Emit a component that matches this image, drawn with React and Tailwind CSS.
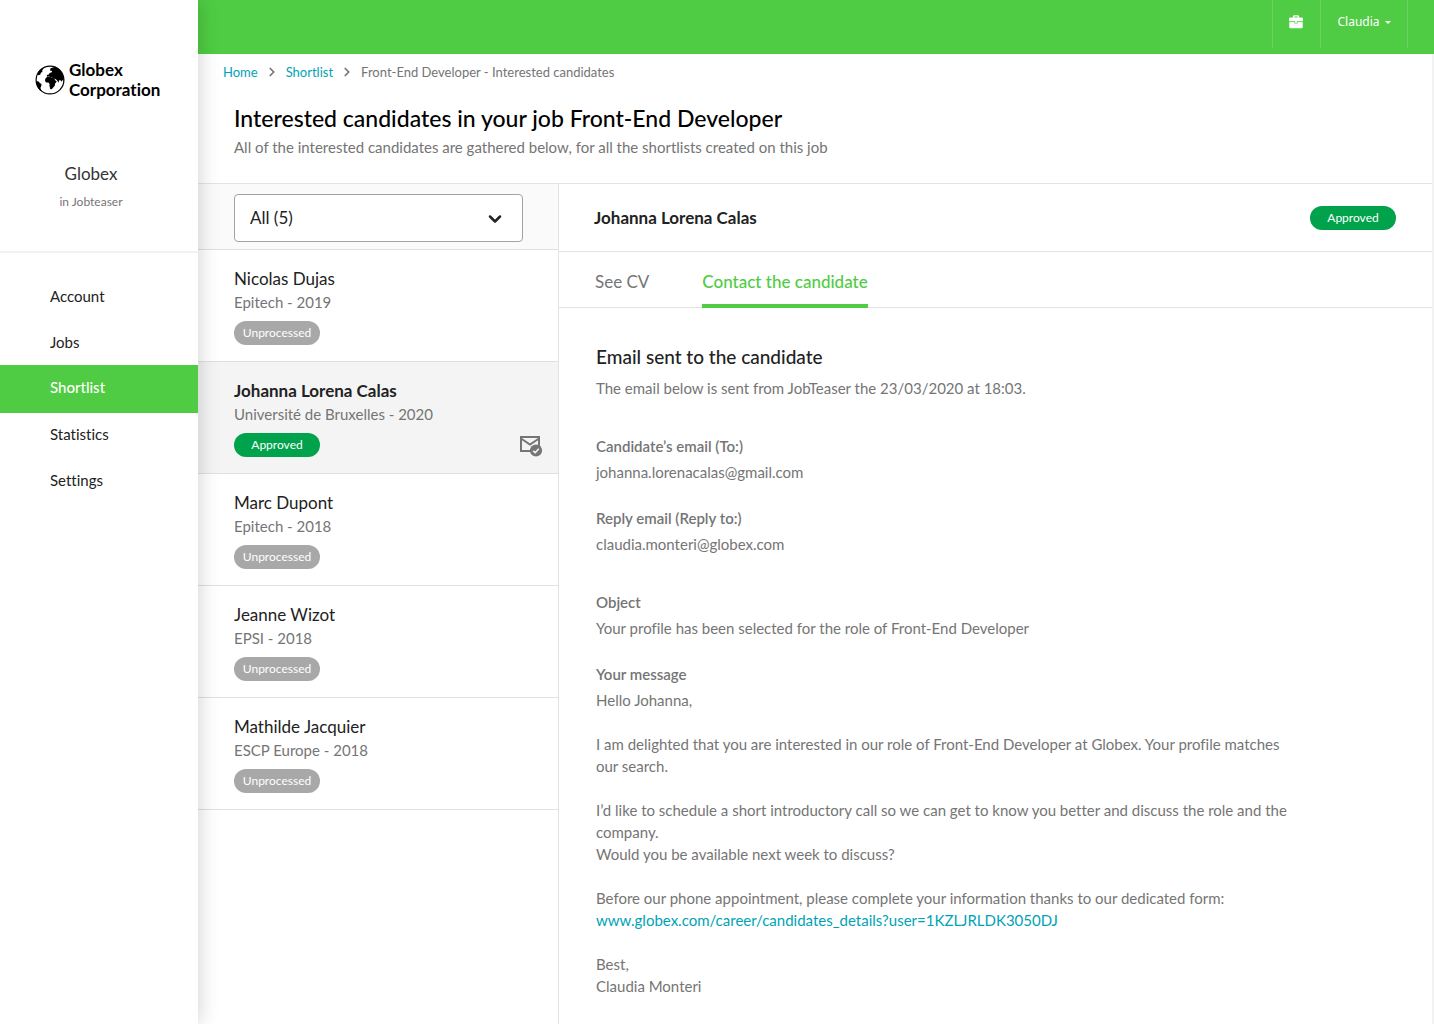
import React, { useState } from 'react';
import { ChevronDown, ChevronRight } from 'lucide-react';

const NAV = ['Account', 'Jobs', 'Shortlist', 'Statistics', 'Settings'];

const CANDIDATES = [
  { name: 'Nicolas Dujas', school: 'Epitech - 2019', status: 'Unprocessed' },
  { name: 'Johanna Lorena Calas', school: 'Université de Bruxelles - 2020', status: 'Approved', mailed: true },
  { name: 'Marc Dupont', school: 'Epitech - 2018', status: 'Unprocessed' },
  { name: 'Jeanne Wizot', school: 'EPSI - 2018', status: 'Unprocessed' },
  { name: 'Mathilde Jacquier', school: 'ESCP Europe - 2018', status: 'Unprocessed' },
];

function Globe() {
  return (
    <svg width="30" height="30" viewBox="0 0 30 30" aria-hidden="true" className="shrink-0">
      <circle cx="15" cy="15" r="13.9" fill="#fff" stroke="#000" strokeWidth="1.2" />
      {/* Europe and Asia */}
      <path d="M15.5 3.2l2.5-.8 2.5-.6 3.6 2.2 3.4 4.6 1.1 4.6.1 3-1.4-1.2-.7 1.8-1.4-1.8-1.2.4-.4 2.4-1.8-2.7-1.8-1.4-2-.2-1-1.2-1.6.2-1-1.2-2.4.4-.2-1.6 2-.6.8-1.4 2.2-.8.2-1.4-2-.4z" />
      {/* Africa */}
      <path d="M10.4 13.4l1.6-1.5 3-.4 1.2 1 2.8.1 1.3 3 1.5.6-1.8 2.6-.2 2-1.6 1.6-1.4 1.9-1.6-.4-.8-3.4.2-1.6-1.2-1.3-2.4-.2-1-1.6z" />
      {/* the Americas */}
      <path d="M2.4 9.6l1.4-3.4 3.8-3.4.9.9-1.3 1.6.2 1.6-1.6.8-.4 1.8-1.6.8z M1.2 16l2.4.4 1.4 1.8 1.6.8-.4 2.2-.8 1.8 1.4 3.4C3.4 24.8 1.4 20.5 1.2 16z" />
    </svg>
  );
}

function MailChecked() {
  return (
    <svg width="24" height="24" viewBox="0 0 24 24" role="img" aria-label="Email sent" fill="none">
      <path d="M2 4h18v14H2z" stroke="#757575" strokeWidth="2" />
      <path d="M2 5.5l9 6 9-6" stroke="#757575" strokeWidth="2" />
      <circle cx="17" cy="17.5" r="6.1" fill="#757575" />
      <path d="M14.2 17.8l2 1.9 3.6-4" stroke="#f4f4f4" strokeWidth="1.6" />
    </svg>
  );
}

function Briefcase() {
  return (
    <svg width="14" height="14" viewBox="0 0 14 14" fill="#fff" aria-hidden="true">
      <path d="M4 2.6V1.4Q4 .3 5.1.3h3.8Q10 .3 10 1.4v1.2h2.8q1.2 0 1.2 1.2V6H8v1.8H6V6H0V3.8q0-1.2 1.2-1.2zM5.3 2.6h3.4v-1H5.3z" />
      <path d="M.3 6.7H5.4v1.8h3.2V6.7h5.1v5.5q0 1-1 1H1.3q-1 0-1-1z" />
    </svg>
  );
}

function Badge({ status }) {
  return (
    <span
      className={`flex h-6 w-[86px] items-center justify-center rounded-full text-[12px] text-white ${
        status === 'Approved' ? 'bg-[#00a34c]' : 'bg-[#a8a8a8]'
      }`}
    >
      {status}
    </span>
  );
}

function Sidebar() {
  return (
    <aside className="relative z-10 w-[198px] shrink-0 bg-white shadow-[0_0_20px_rgba(0,0,0,0.2)]">
      <div className="h-[253px] border-b-2 border-[#f2f2f2]">
        <div className="flex items-center gap-1 pt-[60px] pl-[35px]">
          <Globe />
          <p className="text-[17px] leading-5 font-bold text-black">
            Globex
            <br />
            Corporation
          </p>
        </div>
        <div className="mt-[62px] w-[182px] text-center">
          <p className="text-[17px] leading-6 text-[#333]">Globex</p>
          <p className="mt-1 text-[12px] leading-6 text-[#757575]">in Jobteaser</p>
        </div>
      </div>
      <nav className="pt-[21px]">
        {NAV.map((label) => (
          <a
            key={label}
            href="#"
            className={`flex items-center pl-[50px] text-[15px] ${
              label === 'Shortlist'
                ? '-my-px h-12 bg-[#4fcc43] pb-1 font-medium text-white'
                : 'h-[46px] pb-[2px] text-[#222]'
            }`}
          >
            {label}
          </a>
        ))}
      </nav>
    </aside>
  );
}

function TopBar() {
  return (
    <header className="flex h-[54px] items-start justify-end bg-[#4fcc43] pr-[26px] font-['Noto_Sans',sans-serif]">
      <button type="button" aria-label="Jobs" className="flex h-12 w-12 items-center justify-center border-l border-[#6bd460] pr-px pb-1">
        <Briefcase />
      </button>
      <button type="button" className="flex h-12 w-[88px] items-center justify-center gap-[5px] border-x border-[#6bd460] pb-1 text-[12px] text-white">
        Claudia
        <svg width="6" height="3" viewBox="0 0 6 3" fill="#fff" aria-hidden="true">
          <path d="M0 0h6L3 3z" />
        </svg>
      </button>
    </header>
  );
}

function CandidateList({ selected, onSelect }) {
  return (
    <section className="w-[361px] shrink-0 border-r border-[#e3e3e3]">
      <div className="relative border-b border-[#e0e0e0] bg-[#fafafa] pt-[10px] pr-[35px] pb-[7px] pl-9">
        <select
          aria-label="Filter candidates"
          className="block h-12 w-full appearance-none rounded-[4px] border border-[#a3a3a3] bg-white pl-[15px] text-[17px] text-[#222]"
        >
          <option>All (5)</option>
        </select>
        <ChevronDown size={20} strokeWidth={3} className="pointer-events-none absolute top-[25px] right-[53px] text-[#222]" />
      </div>
      <ul>
        {CANDIDATES.map((c, i) => (
          <li key={c.name} className="border-b border-[#e0e0e0]">
            <button
              type="button"
              onClick={() => onSelect(i)}
              className={`flex w-full items-end justify-between pt-[17px] pr-[15px] pb-4 pl-9 text-left ${
                i === selected ? 'bg-[#f4f4f4]' : ''
              }`}
            >
              <span className="block">
                <span className={`block text-[17px] leading-6 text-[#222] ${i === selected ? 'font-bold' : ''}`}>{c.name}</span>
                <span className="mb-2 block text-[15px] leading-[22px] text-[#757575]">{c.school}</span>
                <Badge status={c.status} />
              </span>
              {c.mailed && <MailChecked />}
            </button>
          </li>
        ))}
      </ul>
    </section>
  );
}

function Field({ label, children }) {
  return (
    <div>
      <dt className="font-semibold">{label}</dt>
      <dd className="mt-1">{children}</dd>
    </div>
  );
}

function Detail({ candidate }) {
  return (
    <section className="min-w-0 flex-1">
      <div className="flex h-[68px] items-center justify-between border-b border-[#e3e3e3] pr-9 pl-[35px]">
        <h2 className="text-[17px] leading-6 font-bold text-[#222]">{candidate.name}</h2>
        <Badge status={candidate.status} />
      </div>
      <div role="tablist" className="flex h-14 gap-[53px] border-b border-[#e3e3e3] pl-9 text-[17px]">
        <button type="button" role="tab" aria-selected="false" className="pt-1 text-[#757575]">
          See CV
        </button>
        <button type="button" role="tab" aria-selected="true" className="-mb-px border-b-4 border-[#4fcc43] pt-2 font-medium text-[#4fcc43]">
          Contact the candidate
        </button>
      </div>
      <div className="px-[37px] pt-[37px] pb-6 text-[15px] leading-[22px] text-[#757575]">
        <h3 className="text-[19px] leading-6 font-medium text-[#222]">Email sent to the candidate</h3>
        <p className="mt-2">The email below is sent from JobTeaser the 23/03/2020 at 18:03.</p>
        <dl className="mt-9 space-y-6">
          <Field label="Candidate’s email (To:)">johanna.lorenacalas@gmail.com</Field>
          <Field label="Reply email (Reply to:)">claudia.monteri@globex.com</Field>
        </dl>
        <dl className="mt-9 space-y-6">
          <Field label="Object">Your profile has been selected for the role of Front-End Developer</Field>
          <Field label="Your message">
            <div className="max-w-[720px] space-y-[22px]">
              <p>Hello Johanna,</p>
              <p>
                I am delighted that you are interested in our role of Front-End Developer at Globex. Your profile matches
                <br />
                our search.
              </p>
              <p>
                I’d like to schedule a short introductory call so we can get to know you better and discuss the role and the
                <br />
                company.
                <br />
                Would you be available next week to discuss?
              </p>
              <p>
                Before our phone appointment, please complete your information thanks to our dedicated form:
                <br />
                <a href="#" className="text-[#00a3b5]">www.globex.com/career/candidates_details?user=1KZLJRLDK3050DJ</a>
              </p>
              <p>
                Best,
                <br />
                Claudia Monteri
              </p>
            </div>
          </Field>
        </dl>
      </div>
    </section>
  );
}

function App() {
  const [selected, setSelected] = useState(1);

  return (
    <div className="flex min-h-screen bg-white font-['Lato',sans-serif] [font-variant-ligatures:none]">
      <Sidebar />
      <div className="flex min-w-0 flex-1 flex-col">
        <TopBar />
        <main className="flex flex-1 flex-col border-r-2 border-[#f2f2f2]">
          <nav aria-label="Breadcrumb" className="flex items-center gap-[7px] pt-[7px] pl-[25px] text-[13px] leading-[22px] text-[#757575]">
            <a href="#" className="text-[#00a3b5]">Home</a>
            <ChevronRight size={14} strokeWidth={3} />
            <a href="#" className="text-[#00a3b5]">Shortlist</a>
            <ChevronRight size={14} strokeWidth={3} />
            <span>Front-End Developer - Interested candidates</span>
          </nav>
          <div className="border-b border-[#e3e3e3] pt-[19px] pb-[25px] pl-9">
            <h1 className="text-[23px] leading-8 font-medium text-black">Interested candidates in your job Front-End Developer</h1>
            <p className="mt-[2px] text-[15px] leading-[22px] text-[#757575]">
              All of the interested candidates are gathered below, for all the shortlists created on this job
            </p>
          </div>
          <div className="flex flex-1">
            <CandidateList selected={selected} onSelect={setSelected} />
            <Detail candidate={CANDIDATES[selected]} />
          </div>
        </main>
      </div>
    </div>
  );
}

export default App;
